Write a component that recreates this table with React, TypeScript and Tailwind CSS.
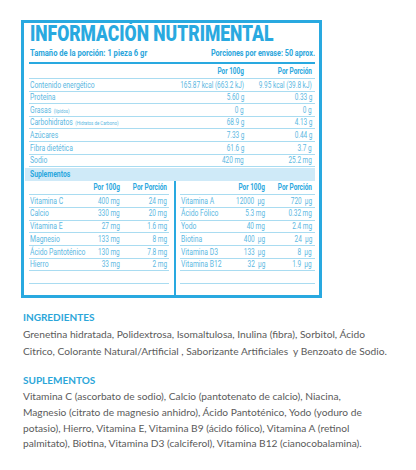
import type { ReactNode } from "react"

const main = [
  { label: "Contenido energético", v1: "165.87 kcal (663.2 kJ)", v2: "9.95 kcal (39.8 kJ)" },
  { label: "Proteína", v1: "5.60 g", v2: "0.33 g" },
  { label: "Grasas", sub: "(lípidos)", v1: "0 g", v2: "0 g" },
  { label: "Carbohidratos", sub: "(Hidratos de Carbono)", v1: "68.9 g", v2: "4.13 g" },
  { label: "Azúcares", v1: "7.33 g", v2: "0.44 g" },
  { label: "Fibra dietética", v1: "61.6 g", v2: "3.7 g" },
  { label: "Sodio", v1: "420 mg", v2: "25.2 mg" },
]

const left = [
  ["Vitamina C", "400 mg", "24 mg"],
  ["Calcio", "330 mg", "20 mg"],
  ["Vitamina E", "27 mg", "1.6 mg"],
  ["Magnesio", "133 mg", "8 mg"],
  ["Ácido Pantoténico", "130 mg", "7.8 mg"],
  ["Hierro", "33 mg", "2 mg"],
  ["", "", ""],
]

const right = [
  ["Vitamina A", "12000  µg", "720  µg"],
  ["Ácido Fólico", "5.3 mg", "0.32 mg"],
  ["Yodo", "40 mg", "2.4 mg"],
  ["Biotina", "400  µg", "24  µg"],
  ["Vitamina D3", "133  µg", "8  µg"],
  ["Vitamina B12", "32  µg", "1.9  µg"],
  ["", "", ""],
]

// condensed look: the narrow face isn't installed, so squeeze Roboto
const N = ({ children, r }: { children: ReactNode; r?: boolean }) => (
  <span className={`inline-block shrink-0 whitespace-pre ${r ? "origin-right scale-x-[0.76]" : "origin-left scale-x-[0.8]"}`}>
    {children}
  </span>
)

const Cell = ({ w, children }: { w: string; children: ReactNode }) => (
  <div className={`${w} flex shrink-0 justify-end`}>
    <N r>{children}</N>
  </div>
)

const SuppTable = ({ rows, c1, side }: { rows: string[][]; c1: string; side: "l" | "r" }) => (
  <div className={side === "l" ? "w-[140px] shrink-0" : "min-w-0 flex-1"}>
    <div className={`flex h-[14px] items-center border-b border-[#a9dcf1] font-bold text-[#2aa7de] ${side === "l" ? "pr-[2px]" : "pr-[3px]"}`}>
      <span className="min-w-0 flex-1" />
      <Cell w={c1}>Por 100g</Cell>
      <Cell w="w-[47px]">Por Porción</Cell>
    </div>
    {rows.map((r, i) => (
      <div key={i} className={`flex h-[12.7px] items-center border-b border-[#a9dcf1] pl-[1px] ${side === "l" ? "pr-[2px]" : "pr-[3px]"}`}>
        <div className="w-0 min-w-0 flex-1">
          <N>{r[0]}</N>
        </div>
        <Cell w={c1}>{r[1]}</Cell>
        <Cell w="w-[47px]">{r[2]}</Cell>
      </div>
    ))}
  </div>
)

export default function App() {
  return (
    <div className="min-h-[470px] w-[416px] bg-white pl-[21px] pt-[20px]">
      {/* tabla nutrimental */}
      <div className="flex h-[278px] w-[301px] flex-col overflow-hidden border-[3px] border-[#29a9e0] pl-[5px] pr-[4px] font-['Roboto',sans-serif] text-[8.5px] leading-none text-[#5cb8e2]">
        <div className="whitespace-nowrap pl-[1px] text-[22px] font-black leading-[22px] text-[#29a9e0]">
          <span className="inline-block origin-left scale-x-[0.795]">INFORMACIÓN NUTRIMENTAL</span>
        </div>
        <div className="mt-[2px] flex h-[12px] items-center justify-between pl-[1px] text-[9.5px] font-bold text-[#2aa5db]">
          <N>Tamaño de la porción: 1 pieza 6 gr</N>
          <N r>Porciones por envase: 50 aprox.</N>
        </div>
        <div className="mt-[3px] h-[2px] bg-[#29a9e0]" />

        <div className="flex h-[15px] items-center border-b border-[#a9dcf1] pr-[3px] font-bold text-[#2aa7de]">
          <span className="flex-1" />
          <Cell w="w-[100px]">Por 100g</Cell>
          <Cell w="w-[68px]">Por Porción</Cell>
        </div>
        {main.map((r) => (
          <div key={r.label} className="flex h-[12.6px] items-center border-b border-[#a9dcf1] pl-[1px] pr-[3px]">
            <div className="w-0 min-w-0 flex-1">
              <N>
                {r.label}
                {r.sub && <span className="ml-[3px] text-[5.5px]">{r.sub}</span>}
              </N>
            </div>
            <Cell w="w-[100px]">{r.v1}</Cell>
            <Cell w="w-[68px]">{r.v2}</Cell>
          </div>
        ))}

        <div className="-ml-[4px] mt-px flex h-[13px] items-center bg-[#cfeaf8] pl-[5px] font-bold text-[#2aa7de]">
          <N>Suplementos</N>
        </div>

        <div className="flex min-w-0 flex-1">
          <SuppTable rows={left} c1="w-[50px]" side="l" />
          <div className="ml-[5px] mr-[4px] w-[2px] shrink-0 bg-[#29a9e0]" />
          <SuppTable rows={right} c1="w-[60px]" side="r" />
        </div>
      </div>

      {/* ingredientes */}
      <div className="ml-[2px] mt-[12px] font-['Lato',sans-serif] text-[#5b5b5b]">
        <div className="text-[10px] font-bold leading-[14px] text-[#2ba6d9]">INGREDIENTES</div>
        <p className="mt-[2px] whitespace-pre text-[10.2px] leading-[16.5px]">
          Grenetina hidratada, Polidextrosa, Isomaltulosa, Inulina (fibra), Sorbitol, Ácido
          <br />
          Citrico, Colorante Natural/Artificial , Saborizante Artificiales  y Benzoato de Sodio.
        </p>

        <div className="mt-[14px] text-[10px] font-bold leading-[14px] text-[#2ba6d9]">SUPLEMENTOS</div>
        <p className="mt-[2px] whitespace-pre text-[10.2px] leading-[15.8px]">
          Vitamina C (ascorbato de sodio), Calcio (pantotenato de calcio), Niacina,
          <br />
          Magnesio (citrato de magnesio anhidro), Ácido Pantoténico, Yodo (yoduro de
          <br />
          potasio), Hierro, Vitamina E, Vitamina B9 (ácido fólico), Vitamina A (retinol
          <br />
          palmitato), Biotina, Vitamina D3 (calciferol), Vitamina B12 (cianocobalamina).
        </p>
      </div>
    </div>
  )
}
